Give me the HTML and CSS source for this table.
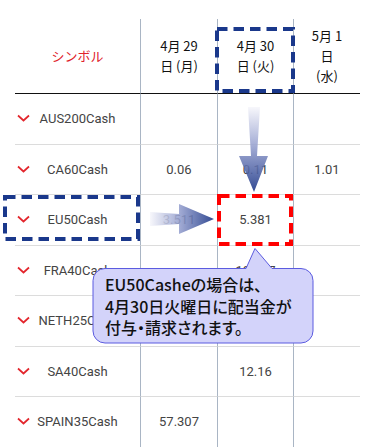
FILE: index.html
```html
<!DOCTYPE html>
<html lang="ja">
<head>
<meta charset="utf-8">
<title>配当スケジュール</title>
<link rel="stylesheet" href="styles.css">
</head>
<body>
<div class="page">
  <div class="table">
    <div class="cell head sym-head">シンボル</div>
    <div class="cell head">4月 29<br>日 (月)</div>
    <div class="cell head">4月 30<br>日 (火)</div>
    <div class="cell head last">5月 1<br>日<br>(水)</div>

    <div class="cell sym"><svg class="chev" viewBox="0 0 13 8"><polyline points="1,1.5 6.5,6.5 12,1.5"/></svg><span>AUS200Cash</span></div>
    <div class="cell"></div><div class="cell"></div><div class="cell last"></div>

    <div class="cell sym"><svg class="chev" viewBox="0 0 13 8"><polyline points="1,1.5 6.5,6.5 12,1.5"/></svg><span>CA60Cash</span></div>
    <div class="cell">0.06</div><div class="cell">0.11</div><div class="cell last">1.01</div>

    <div class="cell sym"><svg class="chev" viewBox="0 0 13 8"><polyline points="1,1.5 6.5,6.5 12,1.5"/></svg><span>EU50Cash</span></div>
    <div class="cell">3.511</div><div class="cell">5.381</div><div class="cell last"></div>

    <div class="cell sym"><svg class="chev" viewBox="0 0 13 8"><polyline points="1,1.5 6.5,6.5 12,1.5"/></svg><span>FRA40Cash</span></div>
    <div class="cell"></div><div class="cell">10.457</div><div class="cell last"></div>

    <div class="cell sym"><svg class="chev" viewBox="0 0 13 8"><polyline points="1,1.5 6.5,6.5 12,1.5"/></svg><span>NETH25Cash</span></div>
    <div class="cell"></div><div class="cell"></div><div class="cell last"></div>

    <div class="cell sym"><svg class="chev" viewBox="0 0 13 8"><polyline points="1,1.5 6.5,6.5 12,1.5"/></svg><span>SA40Cash</span></div>
    <div class="cell"></div><div class="cell">12.16</div><div class="cell last"></div>

    <div class="cell sym"><svg class="chev" viewBox="0 0 13 8"><polyline points="1,1.5 6.5,6.5 12,1.5"/></svg><span>SPAIN35Cash</span></div>
    <div class="cell">57.307</div><div class="cell"></div><div class="cell last"></div>
  </div>

  <svg class="overlay" viewBox="0 0 375 447" width="375" height="447">
    <defs>
      <linearGradient id="gDown" gradientUnits="userSpaceOnUse" x1="0" y1="107" x2="0" y2="192">
        <stop offset="0" stop-color="#f6f6fb"/>
        <stop offset="0.45" stop-color="#98a2d0"/>
        <stop offset="1" stop-color="#183385"/>
      </linearGradient>
      <linearGradient id="gRight" gradientUnits="userSpaceOnUse" x1="150" y1="0" x2="214" y2="0">
        <stop offset="0" stop-color="#f6f6fb"/>
        <stop offset="0.45" stop-color="#98a2d0"/>
        <stop offset="1" stop-color="#183385"/>
      </linearGradient>
    </defs>
    <rect class="dash-blue" x="217" y="29" width="76" height="62"/>
    <rect class="dash-blue" x="5" y="197" width="133" height="42"/>
    <rect class="dash-red" x="219" y="196" width="72" height="48"/>
    <polygon class="arrow" fill="url(#gDown)" points="248,107 260,107 257,156 268,156 254,192 239,156 251,156"/>
    <polygon class="arrow" fill="url(#gRight)" points="150,212 179,214 179,204 214,219 179,234 179,224 150,226"/>
    <path class="bubble" d="M105,268.5 H246 L255,248.5 L272,268.5 H301 A12,12 0 0 1 313,280.5 V331 A12,12 0 0 1 301,343 H105 A12,12 0 0 1 93,331 V280.5 A12,12 0 0 1 105,268.5 Z"/>
  </svg>

  <div class="tip-text">EU50Casheの場合は、<br>4月30日火曜日に配当金が<br>付与・請求されます。</div>
</div>
</body>
</html>
```

FILE: styles.css
```css
html, body {
  margin: 0;
  padding: 0;
  overflow: hidden;
  background: #ffffff;
}

.page {
  position: relative;
  width: 375px;
  height: 447px;
  overflow: hidden;
  padding-top: 19px;
  box-sizing: border-box;
}

.table {
  display: grid;
  grid-template-columns: 126px 77px 76px 66px;
  grid-template-rows: 75px repeat(7, 50.5px);
  width: 345px;
  margin-left: 15px;
  font-family: Roboto, "Noto Sans CJK JP", sans-serif;
  font-size: 13px;
  color: #444444;
}

.cell {
  box-sizing: border-box;
  border-right: 1px solid #a9b5c4;
  border-bottom: 1px solid #dcdcdc;
  display: flex;
  align-items: center;
  justify-content: center;
  text-align: center;
}

.cell.last {
  border-right: none;
}

.head {
  border-bottom: 1px solid #111111;
  font-family: "Noto Sans CJK JP", sans-serif;
  color: #111111;
  line-height: 20px;
}

.sym-head {
  color: #e0232b;
}

.sym {
  display: grid;
  grid-template-columns: 1fr auto 1fr;
  align-items: center;
}

.sym span {
  grid-column: 2;
}

.chev {
  grid-column: 1;
  grid-row: 1;
  justify-self: start;
  width: 13px;
  height: 8px;
  margin-left: 2px;
  margin-top: -1px;
}

.chev polyline {
  fill: none;
  stroke: #e3262d;
  stroke-width: 1.7;
}

.overlay {
  position: absolute;
  left: 0;
  top: 0;
  pointer-events: none;
}

.dash-blue {
  fill: none;
  stroke: #1a388b;
  stroke-width: 4;
  stroke-dasharray: 10.5 6;
}

.dash-red {
  fill: none;
  stroke: #ff0000;
  stroke-width: 4;
  stroke-dasharray: 10.5 6;
}

.arrow {
  opacity: 0.88;
}

.bubble {
  fill: #d3d3fa;
  stroke: #5b5be0;
  stroke-width: 1;
}

.tip-text {
  position: absolute;
  left: 105px;
  top: 274px;
  font-family: "Noto Sans CJK JP", sans-serif;
  font-weight: 500;
  font-size: 16px;
  font-feature-settings: "palt" 1;
  line-height: 21.5px;
  color: #111111;
  white-space: nowrap;
}
```
